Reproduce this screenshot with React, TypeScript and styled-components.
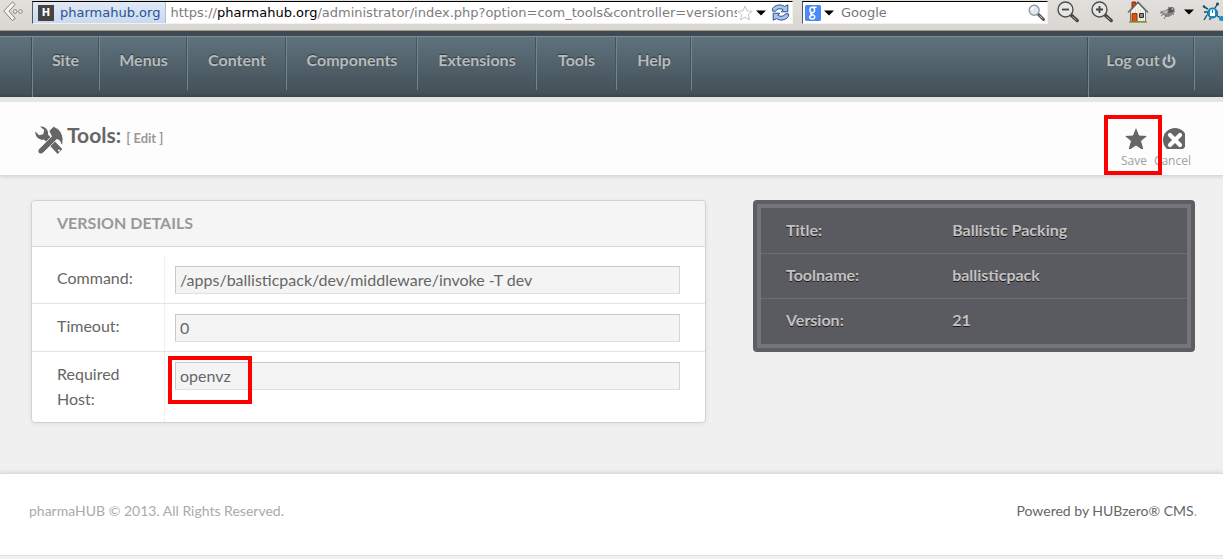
import React from "react";
import styled, { createGlobalStyle, css } from "styled-components";

const GlobalStyle = createGlobalStyle`
  *, *::before, *::after { box-sizing: border-box; }
  body {
    margin: 0;
    background: #f0f0f0;
    color: #666;
    font: 16px/25px Lato, "Open Sans", sans-serif;
  }
  button, input { font: inherit; color: inherit; margin: 0; }
  a { color: inherit; text-decoration: none; }
`;

/* Browser toolbar */

const Chrome = styled.div`
  display: flex;
  align-items: flex-start;
  height: 31px;
  padding: 1px 0 0 3px;
  overflow: hidden;
  background: linear-gradient(#e2e0dc, #dad6d1);
  border-bottom: 1px solid #a39a90;
  font: 13px/20px "DejaVu Sans", sans-serif;
`;

const field = css`
  display: flex;
  align-items: center;
  height: 23px;
  background: #fff;
  border: 1px solid #f4f2ef;
  border-top-color: #000;
  border-left-color: #555;
`;

const AddressBar = styled.div`
  ${field}
  flex: 1;
  min-width: 0;
  margin: 0 9px 0 9px;
  padding-right: 3px;
`;

const SiteBadge = styled.span`
  display: flex;
  align-items: center;
  gap: 6px;
  height: 21px;
  padding: 0 5px;
  background: linear-gradient(#e0e9f6, #c9daf1);
  border-right: 1px solid #a9bcd8;
  color: #2d5191;
`;

const Favicon = styled.b`
  width: 16px;
  height: 16px;
  background: #444;
  color: #fff;
  font-size: 10px;
  line-height: 16px;
  text-align: center;
`;

const Address = styled.span`
  flex: 1;
  min-width: 0;
  margin-left: 4px;
  overflow: hidden;
  white-space: nowrap;
  color: #7d7d7d;

  b { color: #000; font-weight: 400; }
`;

const SearchBox = styled.label`
  ${field}
  width: 246px;
  padding: 0 2px 0 2px;
`;

const SearchInput = styled.input`
  flex: 1;
  min-width: 0;
  height: 20px;
  padding: 0 0 0 7px;
  border: 0;
  outline: 0;
  background: transparent;

  &::placeholder { color: #777; opacity: 1; }
`;

const IconButton = styled.button<{ $gap?: number }>`
  display: flex;
  flex: none;
  margin-left: ${(p) => p.$gap ?? 0}px;
  padding: 0;
  border: 0;
  background: none;
`;

const Extras = styled.div`
  display: flex;
  align-items: center;
  height: 22px;
  margin-left: 10px;
`;

/* Administrator navigation */

const NavBar = styled.header`
  display: flex;
  justify-content: space-between;
  height: 66px;
  padding: 0 28px 0 31px;
  border-top: 5px solid #3d4a51;
  box-shadow: inset 0 1px #7b8f99, inset 0 -2px #3e4a50;
  background: linear-gradient(#5f737e, #424e55);
`;

const Menu = styled.nav`
  display: flex;
  margin-top: 1px;
  border-left: 1px solid #3f4c53;
  box-shadow: inset 1px 0 #74858e;
`;

const MenuItem = styled.a<{ $width: number }>`
  display: flex;
  justify-content: center;
  align-items: center;
  gap: 2px;
  width: ${(p) => p.$width}px;
  height: 53px;
  padding-bottom: 8px;
  border-right: 1px solid #74858e;
  box-shadow: inset -1px 0 #46535a;
  color: #b9bcbd;
  font-weight: 700;
  text-shadow: 0 -1px 1px rgba(0, 0, 0, 0.45);

  svg { margin-top: 4px; }
`;

/* Page title and actions */

const TitleBar = styled.section`
  display: flex;
  justify-content: space-between;
  height: 79px;
  padding: 8px 32px 0 35px;
  background: #fdfdfd;
  border-top: 5px solid #e4e5e5;
  border-bottom: 1px solid #d9d9d9;
  box-shadow: 0 1px 4px rgba(0, 0, 0, 0.12);
`;

const PageTitle = styled.h1`
  display: flex;
  align-items: center;
  gap: 4px;
  height: 59px;
  margin: 0;
  font-size: 21px;
  font-weight: 700;
`;

const TitleText = styled.span`
  padding-bottom: 6px;
`;

const Mode = styled.small`
  color: #999;
  font-size: 13px;
`;

const Actions = styled.div`
  display: flex;
  gap: 7px;
`;

const Action = styled.button`
  position: relative;
  display: flex;
  flex-direction: column;
  align-items: center;
  padding: 18px 0 0;
  border: 0;
  background: none;
  color: #a0a0a0;
  font: 12px/20px "Open Sans", sans-serif;

  svg { display: block; margin: 0 0 2px 4px; }
`;

const Highlight = styled.span<{ $x: number; $y: number; $w: number; $h: number }>`
  position: absolute;
  left: ${(p) => p.$x}px;
  top: ${(p) => p.$y}px;
  width: ${(p) => p.$w}px;
  height: ${(p) => p.$h}px;
  border: 4px solid #f00;
  pointer-events: none;
  z-index: 1;
`;

/* Content */

const Content = styled.main`
  display: grid;
  grid-template-columns: 675fr 442fr;
  align-items: start;
  gap: 47px;
  padding: 24px 28px 50px 31px;
`;

const Panel = styled.form`
  background: #fff;
  border: 1px solid #d2d2d2;
  border-radius: 4px;
  box-shadow: 0 1px 4px rgba(0, 0, 0, 0.08);
`;

const PanelTitle = styled.h2`
  height: 46px;
  margin: 0 0 9px;
  padding-left: 25px;
  background: #f5f5f5;
  border-bottom: 1px solid #d8d8d8;
  border-radius: 4px 4px 0 0;
  color: #999;
  font-size: 16px;
  font-weight: 700;
  line-height: 44px;
  text-transform: uppercase;
`;

const FormRow = styled.div`
  display: grid;
  grid-template-columns: 133px 1fr;
  min-height: 48px;
  border-bottom: 1px solid #e4e4e4;

  &:last-child { border-bottom: 0; }
`;

const Label = styled.label`
  padding: 9px 20px 11px 25px;
  border-right: 1px dotted #e2e2e2;
`;

const Control = styled.div`
  position: relative;
  padding: 10px 25px 0 10px;
`;

const TextInput = styled.input`
  display: block;
  width: 100%;
  height: 28px;
  padding: 0 4px 2px;
  background: #f4f4f4;
  border: 1px solid #c8c8c8;
  border-right-color: #d6d6d6;
  border-bottom-color: #e0e0e0;
  outline: 0;
`;

const Summary = styled.table`
  width: 100%;
  padding: 4px 4px 5px;
  border-spacing: 0;
  border: 4px solid #5d5e63;
  border-radius: 4px;
  box-shadow: inset 0 0 0 4px #747579;
  background: #5a5b60;
  color: #c3c3c3;
  text-shadow: 0 1px 0 #221818;
`;

const cell = css`
  height: 45px;
  padding: 0 0 3px 25px;
  border-top: 1px solid #6d6e73;
  font-weight: 700;
  text-align: left;

  tr:first-child > & { border-top-color: transparent; }
`;

const SummaryLabel = styled.th`
  ${cell}
  width: 39%;
`;

const SummaryValue = styled.td`
  ${cell}
`;

const Footer = styled.footer`
  display: flex;
  justify-content: space-between;
  height: 83px;
  padding: 24px 26px 0 29px;
  background: #fff;
  border-top: 1px solid #dcdcdc;
  border-bottom: 1px solid #e2e2e2;
  box-shadow: 0 -1px 4px rgba(0, 0, 0, 0.1), 0 2px 2px #eaeaea;
  color: #aaa;
  font-size: 14px;

  a { color: #666; }
`;

const Caret = () => (
  <svg width="10" height="6" viewBox="0 0 10 6"><path d="M0 0.5h10L5 5.5z" fill="#000" /></svg>
);

const BackIcon = () => (
  <svg width="20" height="21" viewBox="0 0 20 21" fill="#f3f2ef" stroke="#85837f">
    <path d="M9.500.8 0.800 10l8.500 9.500 3-2L6 10.200l6-6.600z" />
    <circle cx="12" cy="10.500" r="1.800" /><circle cx="17.500" cy="10.500" r="1.800" />
  </svg>
);

const BookmarkIcon = () => (
  <svg width="16" height="16" viewBox="0 0 16 16">
    <path d="m8 1 2 4.900 5.300.4-4 3.400 1.300 5.200L8 12.100l-4.600 2.800 1.300-5.200-4-3.400L6 5.900z" fill="#fff" stroke="#c5c5c5" />
  </svg>
);

const ReloadIcon = () => (
  <svg width="17" height="17" viewBox="0 0 17 17" fill="#a9c6ea" stroke="#285291" strokeLinejoin="round">
    <path d="M.6 7.200V4.500C3 1 8.500-.4 12.500 2.500L15.800.8v7H9.200l2-2C8.500 4 5 4.500 3.600 7.200z" />
    <path d="M16.400 9.800v2.700c-2.400 3.500-7.900 4.900-11.900 2L1.200 16.200v-7h6.600l-2 2c2.700 1.800 6.200 1.300 7.600-1.400z" />
  </svg>
);

const EngineIcon = () => (
  <svg width="16" height="16" viewBox="0 0 16 16">
    <rect width="16" height="16" rx="1.500" fill="#4a8af4" />
    <g fill="none" stroke="#fff" strokeWidth="1.500">
      <ellipse cx="7.300" cy="5" rx="2.300" ry="2.700" />
      <path d="M8 2.300h3.500M6.500 7.600c-1.500 1.200 0 1.700 1.600 2.300 2.600 1 2 4-.8 4-3.300 0-3.500-3.200-.1-3.700" />
    </g>
  </svg>
);

const LookupIcon = () => (
  <svg width="17" height="17" viewBox="0 0 17 17">
    <path d="m10 10 5.500 5.500" stroke="#555" strokeWidth="3" strokeLinecap="round" />
    <path d="m11.500 11.500 3 3" stroke="#bbb" />
    <circle cx="6.200" cy="6.200" r="5" fill="#dce9f6" stroke="#999" strokeWidth="1.400" />
    <path d="M3.500 6a3 3 0 0 1 3-2.700" stroke="#fff" strokeWidth="1.500" fill="none" />
  </svg>
);

const ZoomIcon = ({ plus = false }: { plus?: boolean }) => (
  <svg width="23" height="22" viewBox="0 0 23 22">
    <path d="m13.500 13.500 6.700 6" stroke="#444" strokeWidth="3.400" strokeLinecap="round" />
    <path d="m15.500 15.500 4 3.600" stroke="#aaa" />
    <circle cx="8.500" cy="8.500" r="7.500" fill="#e6e6e3" stroke="#4c5150" strokeWidth="1.400" />
    <path d={plus ? "M5 8.500h7M8.500 5v7" : "M5 8.500h7"} stroke="#444" strokeWidth="1.800" />
  </svg>
);

const HomeIcon = () => (
  <svg width="22" height="22" viewBox="0 0 22 22">
    <path d="M5 1h3.500v6H5z" fill="#d64c12" stroke="#852b08" />
    <path d="M3.500 10 11 2l7.500 8v10.500h-15z" fill="#f6f5ee" stroke="#77776f" />
    <path d="M6 10v10M8.500 8v12M11 5v15M13.500 8v12M16 10v10" stroke="#ccccc4" strokeWidth=".7" />
    <path d="M1 11.500 11 1l10 10.500" fill="none" stroke="#666" strokeWidth="1.400" />
    <path d="M5 12.500h5v8H5z" fill="#dc5412" stroke="#95330a" />
    <path d="M12.500 12.500h4v4h-4z" fill="#888" stroke="#333" />
    <path d="M2 21h18" stroke="#809b31" strokeWidth="1.500" />
  </svg>
);

const FlyIcon = () => (
  <svg width="17" height="15" viewBox="0 0 17 15">
    <path d="M1 6.500 7 5l4-3 4 1 1 4-4 4-5 1z" fill="#8c8c8c" />
    <path d="m2 11 5-4M5 14l3-5M9 12l1-5M1 8l7-1M9 2l3 2M15 10l-3-3" stroke="#777" fill="none" />
    <ellipse cx="12" cy="5" rx="3.500" ry="2.500" fill="#555" transform="rotate(-25 12 5)" />
    <path d="m3 7 7-2-3 4z" fill="#bdbdbd" />
    <circle cx="13.500" cy="4" r="1" fill="#bbb" />
  </svg>
);

const BugIcon = () => (
  <svg width="21" height="21" viewBox="0 0 21 21">
    <path d="m6 8-4-2M13 7l3-5M5 14l-3 5M8 17v2M14 14l6 4M5 11H2" stroke="#174e72" strokeWidth="1.400" />
    <circle cx="15.500" cy="3" r="1.500" fill="#174e72" /><circle cx="2" cy="5.500" r="1.300" fill="#174e72" />
    <circle cx="19.500" cy="17.500" r="2.500" fill="#0d92cc" />
    <ellipse cx="10.500" cy="12" rx="5" ry="5" fill="#0d92cc" stroke="#0a6d9f" />
    <path d="M8 15v-4.500C8 7.500 13 7.500 13 10.500V15z" fill="#fff" /><path d="M10.500 9v3" stroke="#0d7aae" />
  </svg>
);

const PowerIcon = () => (
  <svg width="14" height="15" viewBox="0 0 14 15" fill="none" stroke="currentColor" strokeWidth="2.400">
    <path d="M4 3.200a5.400 5.400 0 1 0 6 0M7 .5v7.500" />
  </svg>
);

const ToolsIcon = () => (
  <svg width="28" height="28" viewBox="0 0 28 28" fill="#666">
    <path d="M5 .5a7 7 0 0 1 8 8l14.300 14.500-4.600 5L9 13.500a7 7 0 0 1-8.500-8L4 9.200l4.200-1 1-4.200z" />
    <circle cx="24" cy="24.500" r="1.100" fill="#fdfdfd" />
    <path d="M14 5 18.700.3l2.500 1.500c3.800 1.700 6.300 6 6.800 11l-.3 5c-.5.800-1.400.7-1.800 0-.5-2.800-2-4-4-4.400L8 27c-1.200 1.200-3 1.300-4.200.1-1.200-1.200-1.100-3 .1-4.200L16.500 10.500z" stroke="#fdfdfd" strokeWidth=".8" />
  </svg>
);

const StarIcon = () => (
  <svg width="22" height="21" viewBox="0 0 22 21">
    <path d="m11 0 3 7.500 8 .4-6 5 2.300 8.100h-2L11 17.500 5.700 21h-2L6 12.900l-6-5 8-.4z" fill="#666" />
  </svg>
);

const CancelIcon = () => (
  <svg width="22" height="21" viewBox="0 0 22 21">
    <circle cx="12" cy="12" r="12" fill="#666" />
    <path d="m7 7 10 10m0-10-10 10" stroke="#fff" strokeWidth="4.200" strokeLinecap="round" />
  </svg>
);

const menu = [
  { label: "Site", width: 68 },
  { label: "Menus", width: 88 },
  { label: "Content", width: 99 },
  { label: "Components", width: 131 },
  { label: "Extensions", width: 119 },
  { label: "Tools", width: 80 },
  { label: "Help", width: 75 },
];

const fields = [
  { id: "command", label: "Command:", value: "/apps/ballisticpack/dev/middleware/invoke -T dev" },
  { id: "timeout", label: "Timeout:", value: "0" },
  { id: "host", label: "Required Host:", value: "openvz", marked: true },
];

const summary = [
  ["Title:", "Ballistic Packing"],
  ["Toolname:", "ballisticpack"],
  ["Version:", "21"],
];

export default function App() {
  return (
    <>
      <GlobalStyle />
      <Chrome>
        <IconButton aria-label="Back"><BackIcon /></IconButton>
        <AddressBar>
          <SiteBadge><Favicon>H</Favicon>pharmahub.org</SiteBadge>
          <Address>
            https://<b>pharmahub.org</b>/administrator/index.php?option=com_tools&amp;controller=versions&amp;
          </Address>
          <IconButton aria-label="Bookmark"><BookmarkIcon /></IconButton>
          <IconButton aria-label="History" $gap={3}><Caret /></IconButton>
          <IconButton aria-label="Reload" $gap={6}><ReloadIcon /></IconButton>
        </AddressBar>
        <SearchBox>
          <EngineIcon />
          <IconButton aria-label="Search engines" $gap={3}><Caret /></IconButton>
          <SearchInput type="text" placeholder="Google" aria-label="Search" />
          <LookupIcon />
        </SearchBox>
        <IconButton aria-label="Zoom out" $gap={9}><ZoomIcon /></IconButton>
        <IconButton aria-label="Zoom in" $gap={11}><ZoomIcon plus /></IconButton>
        <IconButton aria-label="Home" $gap={13}><HomeIcon /></IconButton>
        <Extras>
          <IconButton aria-label="Firebug"><FlyIcon /></IconButton>
          <IconButton aria-label="Firebug options" $gap={8}><Caret /></IconButton>
        </Extras>
        <IconButton aria-label="Inspector" $gap={8}><BugIcon /></IconButton>
      </Chrome>

      <NavBar>
        <Menu>
          {menu.map((m) => (
            <MenuItem key={m.label} href="#" $width={m.width}>{m.label}</MenuItem>
          ))}
        </Menu>
        <Menu>
          <MenuItem href="#" $width={107}>Log out<PowerIcon /></MenuItem>
        </Menu>
      </NavBar>

      <TitleBar>
        <PageTitle>
          <ToolsIcon />
          <TitleText>Tools: <Mode>[ Edit ]</Mode></TitleText>
        </PageTitle>
        <Actions>
          <Action type="button">
            <StarIcon />
            Save
            <Highlight $x={-17} $y={5} $w={58} $h={60} />
          </Action>
          <Action type="button"><CancelIcon />Cancel</Action>
        </Actions>
      </TitleBar>

      <Content>
        <Panel>
          <PanelTitle>Version Details</PanelTitle>
          {fields.map((f) => (
            <FormRow key={f.id}>
              <Label htmlFor={f.id}>{f.label}</Label>
              <Control>
                <TextInput id={f.id} type="text" defaultValue={f.value} />
                {f.marked && <Highlight $x={3} $y={4} $w={84} $h={48} />}
              </Control>
            </FormRow>
          ))}
        </Panel>
        <Summary>
          <tbody>
            {summary.map(([name, value]) => (
              <tr key={name}>
                <SummaryLabel scope="row">{name}</SummaryLabel>
                <SummaryValue>{value}</SummaryValue>
              </tr>
            ))}
          </tbody>
        </Summary>
      </Content>

      <Footer>
        <span>pharmaHUB © 2013. All Rights Reserved.</span>
        <span><a href="#">Powered by HUBzero® CMS</a>.</span>
      </Footer>
    </>
  );
}
